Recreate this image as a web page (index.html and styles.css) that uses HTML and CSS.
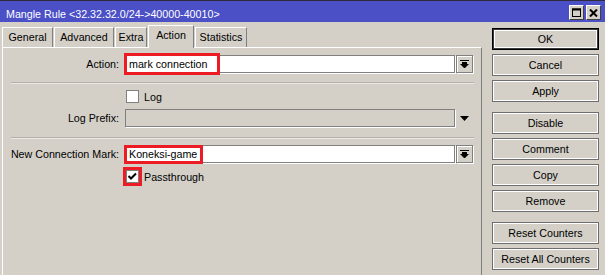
FILE: index.html
```html
<!doctype html>
<html>
<head>
<meta charset="utf-8">
<title>Mangle Rule</title>
<link rel="stylesheet" href="styles.css">
</head>
<body>
<div class="window">

<div class="titlebar">
	<span class="title">Mangle Rule &lt;32.32.32.0/24-&gt;40000-40010&gt;</span>
	<span class="tbtn">
		<svg width="9" height="9" viewBox="0 0 9 9"><rect x="0.5" y="1" width="8" height="7.5" fill="none" stroke="#000" stroke-width="1"/><rect x="0" y="0.5" width="9" height="2" fill="#000"/></svg>
	</span>
	<span class="tbtn close">
		<svg width="9" height="8" viewBox="0 0 9 8"><path d="M1 0.5 L8 7.5 M8 0.5 L1 7.5" stroke="#000" stroke-width="2"/></svg>
	</span>
</div>

<div class="main">
	<div class="left">
		<div class="tabs">
			<div class="tab t-general">General</div>
			<div class="tab t-advanced">Advanced</div>
			<div class="tab t-extra">Extra</div>
			<div class="tab t-action active">Action</div>
			<div class="tab t-stats">Statistics</div>
		</div>

		<div class="panel">
			<div class="row r-action">
				<span class="lbl">Action:</span>
				<div class="field">
					<div class="input">mark connection</div>
					<span class="mark mark-action"></span>
				</div>
				<span class="dropbtn">
					<svg width="9" height="8" viewBox="0 0 9 8"><rect x="0" y="0" width="9" height="1" fill="#000"/><rect x="2" y="2" width="5" height="2" fill="#000"/><path d="M0 4 H9 L4.5 8.5 Z" fill="#000"/></svg>
				</span>
			</div>

			<div class="sep"></div>

			<div class="row r-log">
				<span class="lbl"></span>
				<span class="check"></span>
				<span class="check-text">Log</span>
			</div>

			<div class="row r-prefix">
				<span class="lbl">Log Prefix:</span>
				<div class="field">
					<div class="input disabled"></div>
				</div>
				<span class="dropcaret">
					<svg width="9" height="5" viewBox="0 0 9 5"><path d="M0 0 H9 L4.5 5 Z" fill="#000"/></svg>
				</span>
			</div>

			<div class="sep sep-2"></div>

			<div class="row r-mark">
				<span class="lbl">New Connection Mark:</span>
				<div class="field">
					<div class="input">Koneksi-game</div>
					<span class="mark mark-conn"></span>
				</div>
				<span class="dropbtn">
					<svg width="9" height="8" viewBox="0 0 9 8"><rect x="0" y="0" width="9" height="1" fill="#000"/><rect x="2" y="2" width="5" height="2" fill="#000"/><path d="M0 4 H9 L4.5 8.5 Z" fill="#000"/></svg>
				</span>
			</div>

			<div class="row r-pass">
				<span class="lbl"></span>
				<span class="check checked">
					<svg width="11" height="11" viewBox="0 0 11 11"><path d="M1.5 5 L4 7.5 L9 2.5" fill="none" stroke="#000" stroke-width="2"/></svg>
					<span class="mark mark-check"></span>
				</span>
				<span class="check-text">Passthrough</span>
			</div>
		</div>
	</div>

	<div class="buttons">
		<div class="btn default">OK</div>
		<div class="btn">Cancel</div>
		<div class="btn group-end">Apply</div>
		<div class="btn">Disable</div>
		<div class="btn">Comment</div>
		<div class="btn">Copy</div>
		<div class="btn group-end">Remove</div>
		<div class="btn">Reset Counters</div>
		<div class="btn">Reset All Counters</div>
	</div>
</div>

</div>
</body>
</html>
```

FILE: styles.css
```css
	body {
		margin: 0;
		background: #d4d0c8;
		font-family: "Liberation Sans", Arial, sans-serif;
		font-size: 10.7px;
		color: #000;
	}
	.window {
		width: 605px;
		height: 275px;
		overflow: hidden;
		display: flex;
		flex-direction: column;
	}

	/* title bar */
	.titlebar {
		height: 21px;
		flex: none;
		border-top: 1px solid #2c2c3c;
		background: #4b50c6;
		color: #fff;
		display: flex;
		align-items: flex-start;
		padding-left: 6px;
		padding-right: 4px;
	}
	.title {
		flex: 1;
		margin-top: 7px;
		line-height: 12px;
		white-space: nowrap;
	}
	.tbtn {
		width: 15px;
		height: 15px;
		margin-top: 4px;
		margin-left: 2px;
		box-sizing: border-box;
		background: #d4d0c8;
		border: 1px solid;
		border-color: #fff #404040 #404040 #fff;
		display: flex;
		align-items: center;
		justify-content: center;
	}

	.main {
		flex: 1;
		display: flex;
	}
	.left {
		width: 482px;
		display: flex;
		flex-direction: column;
	}

	/* tabs */
	.tabs {
		display: flex;
		align-items: flex-end;
		height: 22px;
		margin-top: 3px;
		padding-left: 2px;
		position: relative;
		z-index: 1;
	}
	.tab {
		box-sizing: border-box;
		height: 20px;
		line-height: 19px;
		margin-right: 1px;
		text-align: center;
		border-top: 1px solid #fff;
		border-left: 1px solid #fff;
		border-right: 1px solid #808080;
		white-space: nowrap;
	}
	.t-general { width: 51px; }
	.t-advanced { width: 60px; }
	.t-extra { width: 32px; }
	.t-action { width: 46px; }
	.t-stats { width: 52px; }
	.tab.active {
		height: 23px;
		line-height: 19px;
		margin-bottom: -1px;
		background: #d4d0c8;
	}

	/* form panel */
	.panel {
		flex: 1;
		width: 480px;
		box-sizing: border-box;
		margin-left: 2px;
		border-top: 1px solid #fff;
		border-left: 1px solid #fff;
		border-right: 1px solid #808080;
	}
	.row {
		display: flex;
		align-items: center;
	}
	.lbl {
		flex: none;
		width: 116px;
		margin-right: 6px;
		text-align: right;
		white-space: nowrap;
	}
	.r-action { margin-top: 7px; height: 18px; }
	.r-log { margin-top: 6px; height: 13px; }
	.r-prefix { margin-top: 6px; height: 18px; }
	.r-mark { margin-top: 6px; height: 18px; }
	.r-pass { margin-top: 7px; height: 13px; }

	.sep {
		width: 463px;
		margin: 9px 0 0 8px;
		border-top: 1px solid #b5b1a9;
		border-bottom: 1px solid #ebe9e4;
	}
	.sep-2 { margin-top: 10px; }

	.field {
		position: relative;
		width: 330px;
		height: 18px;
	}
	.input {
		box-sizing: border-box;
		height: 18px;
		line-height: 16px;
		padding-left: 3px;
		background: #fff;
		border: 1px solid #808080;
		box-shadow: 1px 1px 0 #fff;
		white-space: nowrap;
	}
	.input.disabled {
		background: #d4d0c8;
	}
	.dropbtn {
		box-sizing: border-box;
		width: 17px;
		height: 18px;
		margin-left: 1px;
		border: 1px solid #808080;
		box-shadow: 1px 1px 0 #fff, inset 1px 1px 0 #fff;
		display: flex;
		align-items: center;
		justify-content: center;
	}
	.dropcaret {
		width: 17px;
		height: 18px;
		margin-left: 1px;
		display: flex;
		align-items: center;
		justify-content: center;
	}

	.check {
		position: relative;
		box-sizing: border-box;
		width: 13px;
		height: 13px;
		margin-left: 1px;
		background: #fff;
		border: 1px solid #808080;
		display: flex;
		align-items: center;
		justify-content: center;
	}
	.check-text {
		margin-left: 5px;
		white-space: nowrap;
	}

	/* red annotation boxes drawn over the screenshot */
	.mark {
		position: absolute;
		box-sizing: border-box;
		border: 3px solid #ec1c24;
	}
	.mark-action {
		left: -1px;
		top: -2px;
		width: 96px;
		height: 22px;
	}
	.mark-conn {
		left: -1px;
		top: 0;
		width: 79px;
		height: 19px;
	}
	.mark-check {
		left: -4px;
		top: -4px;
		width: 19px;
		height: 19px;
	}

	/* side buttons */
	.buttons {
		width: 107px;
		margin-left: 10px;
		padding-top: 6px;
		display: flex;
		flex-direction: column;
	}
	.btn {
		box-sizing: border-box;
		height: 22px;
		margin-bottom: 4px;
		line-height: 20px;
		text-align: center;
		white-space: nowrap;
		border: 1px solid #6e6e6e;
		box-shadow: inset 1px 1px 0 #fff, inset -1px -1px 0 #fff;
	}
	.btn.group-end {
		margin-bottom: 10px;
	}
	.btn.default {
		border-color: #000;
		box-shadow: inset 0 0 0 1px #3a3a3a, inset 0 0 0 2px #fff;
	}
```
